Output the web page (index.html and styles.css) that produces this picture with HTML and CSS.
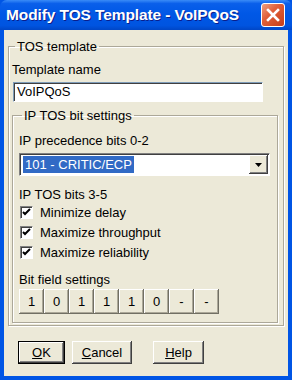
FILE: index.html
```html
<!DOCTYPE html>
<html lang="en">
<head>
  <meta charset="UTF-8" />
  <title>Modify TOS Template - VoIPQoS</title>
  <link rel="stylesheet" href="styles.css">
</head>
<body>
  <div class="window">
    <div class="titlebar">
      <span class="title">Modify TOS Template - VoIPQoS</span>
      <span class="close" aria-label="Close">
        <svg width="14" height="14" viewBox="0 0 14 14" aria-hidden="true">
          <path d="M2 2L12 12M12 2L2 12" stroke="#fff" stroke-width="2.6" stroke-linecap="square"/>
        </svg>
      </span>
    </div>

    <div class="client">
      <fieldset class="group outer">
        <legend>TOS template</legend>
        <div class="lbl">Template name</div>
        <div class="textbox">VoIPQoS</div>

        <fieldset class="group inner">
          <legend>IP TOS bit settings</legend>
          <div class="lbl">IP precedence bits 0-2</div>
          <div class="combo">
            <span class="sel">101 - CRITIC/ECP</span>
            <span class="drop">
              <svg width="7" height="4" viewBox="0 0 7 4" aria-hidden="true"><path d="M0 0H7L3.5 4Z" fill="#000"/></svg>
            </span>
          </div>

          <div class="lbl bits-title">IP TOS bits 3-5</div>
          <!-- bits 3-5 -->
          <div class="check"><span class="box"><svg width="9" height="9" viewBox="0 0 9 9"><path d="M1 4L3 6L8 1" fill="none" stroke="#000" stroke-width="2"/></svg></span>Minimize delay</div>
          <div class="check"><span class="box"><svg width="9" height="9" viewBox="0 0 9 9"><path d="M1 4L3 6L8 1" fill="none" stroke="#000" stroke-width="2"/></svg></span>Maximize throughput</div>
          <div class="check"><span class="box"><svg width="9" height="9" viewBox="0 0 9 9"><path d="M1 4L3 6L8 1" fill="none" stroke="#000" stroke-width="2"/></svg></span>Maximize reliability</div>

          <div class="lbl field-title">Bit field settings</div>
          <div class="bits">
            <span class="bit">1</span><span class="bit">0</span><span class="bit">1</span><span class="bit">1</span>
            <span class="bit">1</span><span class="bit">0</span><span class="bit">-</span><span class="bit">-</span>
          </div>
        </fieldset>
      </fieldset>

      <div class="actions">
        <button class="btn btn-ok"><u>O</u>K</button>
        <button class="btn btn-cancel"><u>C</u>ancel</button>
        <button class="btn btn-help"><u>H</u>elp</button>
      </div>
    </div>
  </div>
</body>
</html>
```

FILE: styles.css
```css
/* ===== Dialog window ===== */
body { margin: 0; background: #fff; }

.window {
  width: 292px; height: 380px; box-sizing: border-box;
  background: #0055e5;
  padding: 0 4px 4px 4px;
  display: flex; flex-direction: column;
  font-family: "Liberation Sans", Arial, sans-serif; font-size: 13px; color: #000;
}

.titlebar {
  height: 30px; margin: 0 -4px; padding: 0 7px 0 6px;
  display: flex; align-items: center; justify-content: space-between;
  background: linear-gradient(#3a8cf7 0%, #0a5fea 12%, #0058e6 45%, #0054e0 85%, #0046c6 100%);
  border-radius: 7px 7px 0 0;
}
.title {
  color: #fff; font-weight: bold; font-size: 15.5px; letter-spacing: -0.1px;
  text-shadow: 1px 1px 0 #0a1e8c;
}
.close {
  width: 22px; height: 22px; border: 1px solid #fff; border-radius: 3px;
  display: flex; align-items: center; justify-content: center;
  background: linear-gradient(135deg, #f0a080 0%, #e0603a 40%, #c73d18 100%);
}

.client {
  flex: 1; background: #ece9d8;
  padding: 9px 4px 0 4px;
}

/* ===== Group boxes ===== */
.group {
  margin: 0; min-width: 0;
  border: 1px solid #aca899;
  box-shadow: inset 1px 1px 0 #fff, 1px 1px 0 #fff;
}
.group legend { padding: 0 2px; margin-left: 3px; line-height: 15px; }

.outer { padding: 8px 5px 2px 3px; }
.inner { margin-top: 6px; padding: 10px 7px 8px 6px; }

.lbl { line-height: 15px; }

.textbox {
  margin: 5px 15px 0 1px; height: 20px; box-sizing: border-box;
  background: #fff; line-height: 16px; padding: 1px 3px;
  border: 1px solid #fff;
  border-top-color: #7f9db9; border-left-color: #7f9db9;
  box-shadow: inset 1px 1px 0 #404040;
}

.combo {
  margin-top: 5px; height: 23px; box-sizing: border-box;
  background: #fff; padding: 1px; display: flex; align-items: center; justify-content: space-between;
  border: 1px solid #fff; border-top-color: #808080; border-left-color: #808080;
  box-shadow: inset 1px 1px 0 #404040;
}
.sel {
  background: #316ac5; color: #fff; line-height: 17px; padding: 0 2px; margin-left: 2px;
}
.drop {
  width: 19px; height: 19px; background: #ece9d8;
  display: flex; align-items: center; justify-content: center;
  box-shadow: inset -1px -1px 0 #404040, inset 1px 1px 0 #fff, inset -2px -2px 0 #808080;
}

.bits-title { margin-top: 11px; }

.check { height: 20px; display: flex; align-items: center; gap: 7px; margin-left: 1px; }
.check .box {
  width: 13px; height: 13px; box-sizing: border-box; background: #fff;
  display: flex; align-items: center; justify-content: center;
  border: 1px solid #fff; border-top-color: #808080; border-left-color: #808080;
  box-shadow: inset 1px 1px 0 #404040;
}

.field-title { margin-top: 10px; }

.bits { display: flex; margin-top: 2px; }
.bit {
  width: 25px; height: 25px; box-sizing: border-box;
  display: flex; align-items: center; justify-content: center;
  background: #ece9d8;
  box-shadow: inset -1px -1px 0 #716f64, inset 1px 1px 0 #fff, inset -2px -2px 0 #aca899;
}

/* ===== Buttons ===== */
.actions { display: flex; margin: 15px 0 0 10px; }
.btn {
  height: 23px; font: inherit; color: #000; background: #ece9d8; padding: 0;
  border: none;
  box-shadow: inset -1px -1px 0 #404040, inset 1px 1px 0 #fff, inset -2px -2px 0 #808080;
}
.btn-ok {
  width: 47px; border: 1px solid #000;
}
.btn-cancel { width: 60px; margin-left: 7px; }
.btn-help { width: 51px; margin-left: 21px; }
```
